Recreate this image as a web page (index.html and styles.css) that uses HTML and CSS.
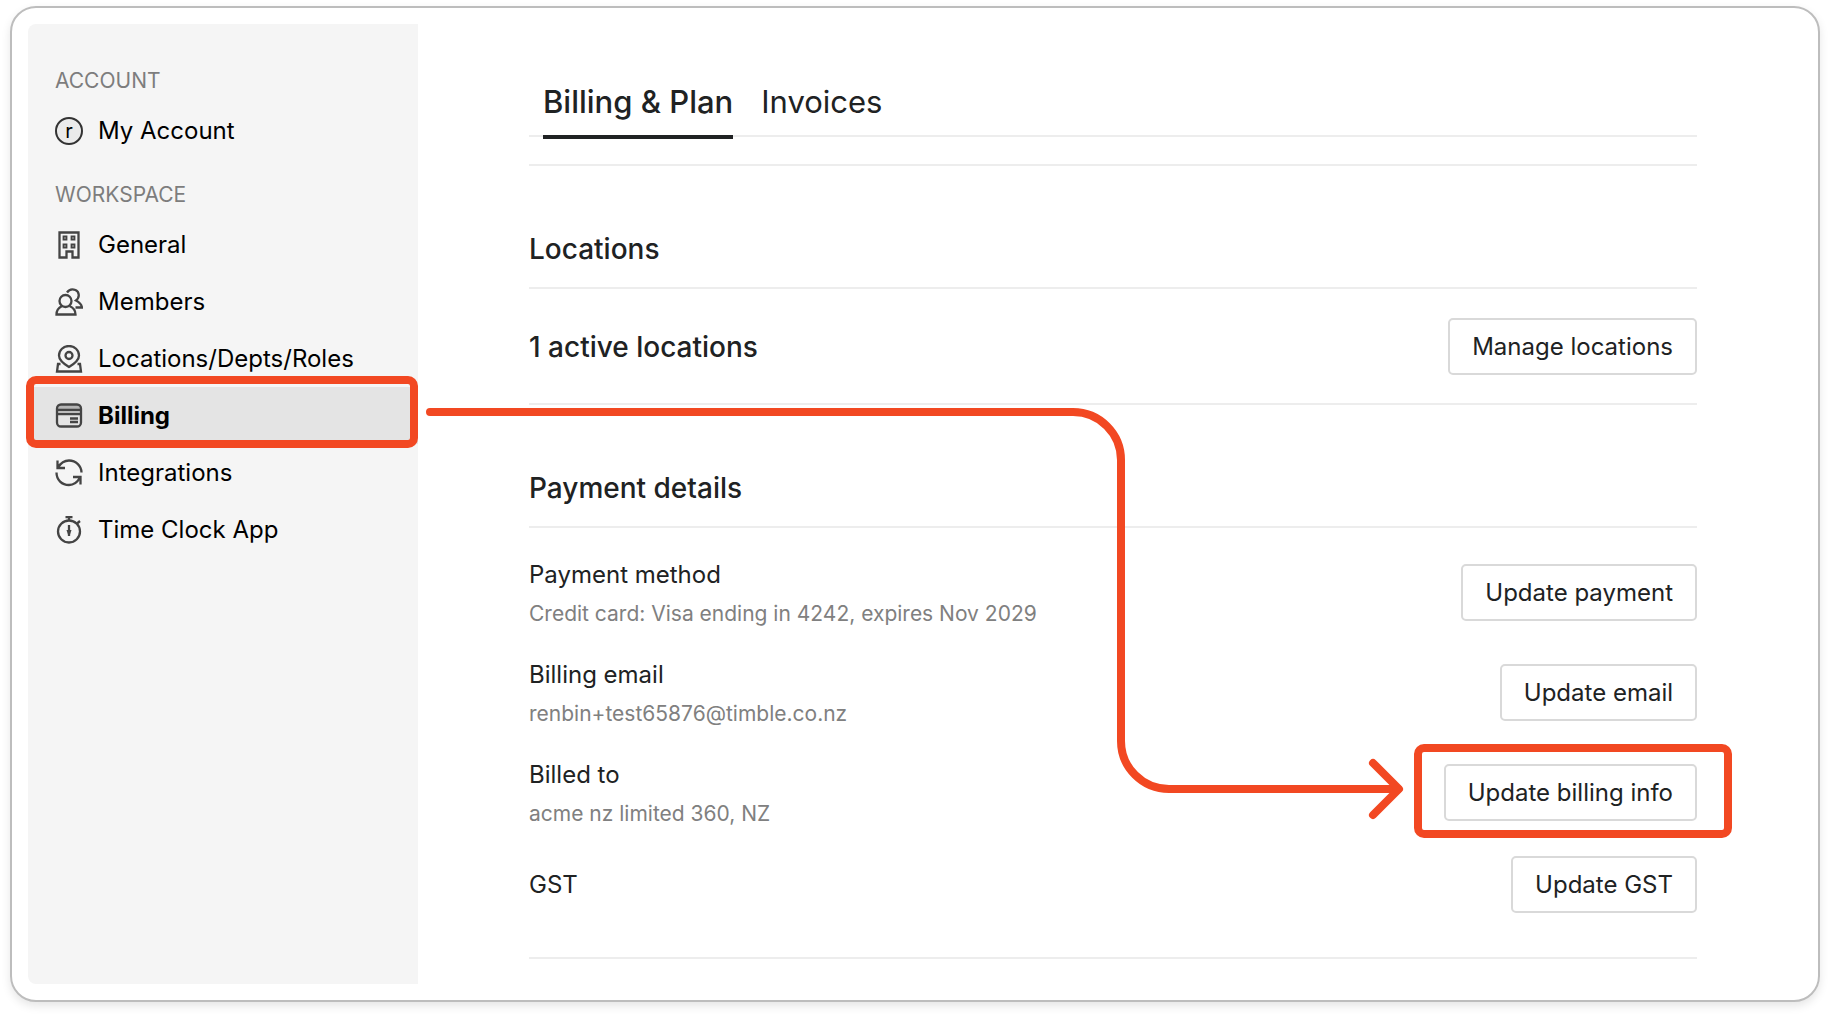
FILE: index.html
```html
<!DOCTYPE html>
<html lang="en">
<head>
    <meta charset="UTF-8">
    <meta name="viewport" content="width=device-width, initial-scale=1.0">
    <title>Billing &amp; Plan</title>
    <link rel="stylesheet" href="styles.css">
</head>
<body>
    <div class="card">
        <nav class="sidebar">
            <h2>Account</h2>
            <a href="#" class="nav-item">
                <span class="avatar">r</span>
                My Account
            </a>

            <h2>Workspace</h2>
            <a href="#" class="nav-item">
                <svg class="icon" viewBox="0 0 28 28">
                    <path d="M4.5 1.5H23.5V26.500H17.500V20.500H11.500V26.500H4.500Z"/>
                    <path class="thin" d="M8.500 5.500h3v3h-3zM16.500 5.500h3v3h-3zM8.500 13.500h3v3h-3zM16.500 13.500h3v3h-3z"/>
                </svg>
                General
            </a>
            <a href="#" class="nav-item">
                <svg class="icon" viewBox="0 0 28 28">
                    <circle cx="10.5" cy="13" r="6"/>
                    <path d="M7 18C4 19.5 1.5 22.5 1.5 26.500H20.500C20.500 22.500 18 19.500 14.500 18"/>
                    <path d="M12 4.500C14 1.500 17.500 .8 20.500 2C24.500 4 25 9.500 21 12.500C24 14 26.500 16.500 27 19.500H20.500"/>
                </svg>
                Members
            </a>
            <a href="#" class="nav-item">
                <svg class="icon" viewBox="0 0 28 28">
                    <path d="M14 22C9 19 4 15.500 4 10.500A10 9.500 0 0 1 24 10.500C24 15.500 19 19 14 22Z"/>
                    <circle cx="14" cy="10.5" r="3.5"/>
                    <path d="M5.500 19H3L2 26.500H26L25 19H22.500"/>
                </svg>
                Locations/Depts/Roles
            </a>
            <a href="#" class="nav-item active">
                <svg class="icon" viewBox="0 0 28 28">
                    <path class="band" d="M3 3H25V8H3Z"/>
                    <rect x="2" y="2.5" width="24" height="22" rx="4"/>
                    <path d="M2 8H26M2 12H26M15 16.500H23M15 20H23"/>
                </svg>
                Billing
                <span class="highlight highlight-nav"></span>
            </a>
            <a href="#" class="nav-item">
                <svg class="icon" viewBox="0 0 28 28">
                    <path d="M2.500 1.500V9H10M3 8.500C6 3.500 10 1.500 14 1.500C21 1.500 26.500 7 26.500 13.500"/>
                    <path d="M25.500 25.500V18H18M25 18.500C22 24 18 26 14 26C7 26 1.500 21 1.500 13.500"/>
                </svg>
                Integrations
            </a>
            <a href="#" class="nav-item">
                <svg class="icon" viewBox="0 0 28 28">
                    <circle cx="14" cy="15.5" r="11"/>
                    <path d="M10.500 1H17.500M14 1V4.500M22 7.500L25 5"/>
                    <path d="M14 9V20"/>
                    <path class="solid" d="M11.500 14H16.500L15 18.500H13Z"/>
                </svg>
                Time Clock App
            </a>
        </nav>

        <main>
            <div class="tabs">
                <a href="#" class="tab current">Billing &amp; Plan</a>
                <a href="#" class="tab">Invoices</a>
            </div>

            <section>
                <h3>Locations</h3>
                <div class="row row-locations">
                    <p class="count">1 active locations</p>
                    <button type="button">Manage locations</button>
                </div>
            </section>

            <section>
                <h3>Payment details</h3>
                <div class="details">
                    <div class="row">
                        <div class="info">
                            <p>Payment method</p>
                            <p class="sub">Credit card: Visa ending in 4242, expires Nov 2029</p>
                        </div>
                        <button type="button">Update payment</button>
                    </div>
                    <div class="row">
                        <div class="info">
                            <p>Billing email</p>
                            <p class="sub">renbin+test65876@timble.co.nz</p>
                        </div>
                        <button type="button">Update email</button>
                    </div>
                    <div class="row">
                        <div class="info">
                            <p>Billed to</p>
                            <p class="sub">acme nz limited 360, NZ</p>
                        </div>
                        <button type="button">Update billing info<span class="highlight highlight-button"></span></button>
                    </div>
                    <div class="row">
                        <p>GST</p>
                        <button type="button">Update GST</button>
                    </div>
                </div>
            </section>
        </main>

        <!-- Arrow from the Billing link to the billing info button -->
        <svg class="arrow" width="980" height="416" viewBox="0 0 980 416">
            <path d="M6 8H649A48 48 0 0 1 697 56V337A48 48 0 0 0 745 385H974"/>
            <path d="M949 359L975 385L949 411"/>
        </svg>
    </div>
</body>
</html>
```

FILE: styles.css
```css
* {
    box-sizing: border-box;
    margin: 0;
    padding: 0;
}

body {
    background: #fff;
    color: #202223;
    font-family: Inter, "Liberation Sans", sans-serif;
    font-size: 24px;
    line-height: 32px;
    padding: 6px 10px 14px;
}

a {
    color: inherit;
    text-decoration: none;
}

.card {
    position: relative;
    display: flex;
    min-height: calc(100vh - 20px);
    padding: 16px;
    border: 2px solid #bdbdbd;
    border-radius: 26px;
    box-shadow: 0 4px 10px rgba(0, 0, 0, 0.1);
}

/* Sidebar */
.sidebar {
    flex: 0 0 390px;
    padding-top: 42px;
    background: #f5f5f5;
    border-radius: 8px 0 0 8px;
    color: #000;
}

.sidebar h2 {
    padding: 0 27px 6px;
    color: #7d7d7d;
    font-size: 21px;
    font-weight: 400;
    line-height: 30px;
    text-transform: uppercase;
}

.nav-item + h2 {
    margin-top: 21px;
}

.nav-item {
    position: relative;
    display: flex;
    align-items: center;
    gap: 15px;
    height: 57px;
    padding: 0 27px;
}

.nav-item.active {
    background: #e4e4e4;
    font-weight: 700;
}

.icon {
    width: 28px;
    height: 28px;
    fill: none;
    stroke: #444;
    stroke-width: 2.3;
}

.icon .thin {
    stroke-width: 1.8;
}

.icon .band {
    fill: #b5b5b5;
    stroke: none;
}

.icon .solid {
    fill: #444;
    stroke: none;
}

.avatar {
    width: 28px;
    height: 28px;
    border: 2px solid #333;
    border-radius: 50%;
    background: #ebebeb;
    font-size: 20px;
    line-height: 24px;
    text-align: center;
}

/* Content */
main {
    flex: 1;
    padding: 50px 105px 0 111px;
}

.tabs {
    display: flex;
    gap: 28px;
    padding: 0 14px;
    border-bottom: 2px solid #ededed;
    font-size: 31px;
    line-height: 56px;
}

.tab {
    height: 65px;
    margin-bottom: -4px;
}

.tab.current {
    border-bottom: 4px solid #202223;
    font-weight: 500;
}

section {
    border-bottom: 2px solid #ededed;
}

.tabs + section {
    margin-top: 27px;
    border-top: 2px solid #ededed;
}

h3 {
    padding: 63px 0 18px;
    border-bottom: 2px solid #ededed;
    font-size: 28px;
    font-weight: 500;
    line-height: 40px;
}

.row {
    display: flex;
    align-items: center;
    justify-content: space-between;
}

.row-locations {
    padding: 29px 0 28px;
}

.count {
    font-size: 28px;
    font-weight: 500;
}

.details {
    display: grid;
    gap: 27px;
    padding: 28px 0 44px;
}

.info {
    padding-top: 3px;
}

.sub {
    margin-top: 8px;
    color: #808080;
    font-size: 21px;
    line-height: 30px;
}

button {
    position: relative;
    height: 57px;
    padding: 0 22px;
    border: 2px solid #d9d9d9;
    border-radius: 5px;
    background: #fff;
    color: inherit;
    font: inherit;
}

/* Callouts */
.highlight {
    position: absolute;
    border: 8px solid #f24822;
    border-radius: 10px;
}

.highlight-nav {
    inset: -11px 0 -4px -2px;
}

.highlight-button {
    inset: -22px -37px -19px -32px;
}

.arrow {
    position: absolute;
    top: 396px;
    left: 412px;
    fill: none;
    stroke: #f24822;
    stroke-width: 8;
    stroke-linecap: round;
    stroke-linejoin: round;
}
```
